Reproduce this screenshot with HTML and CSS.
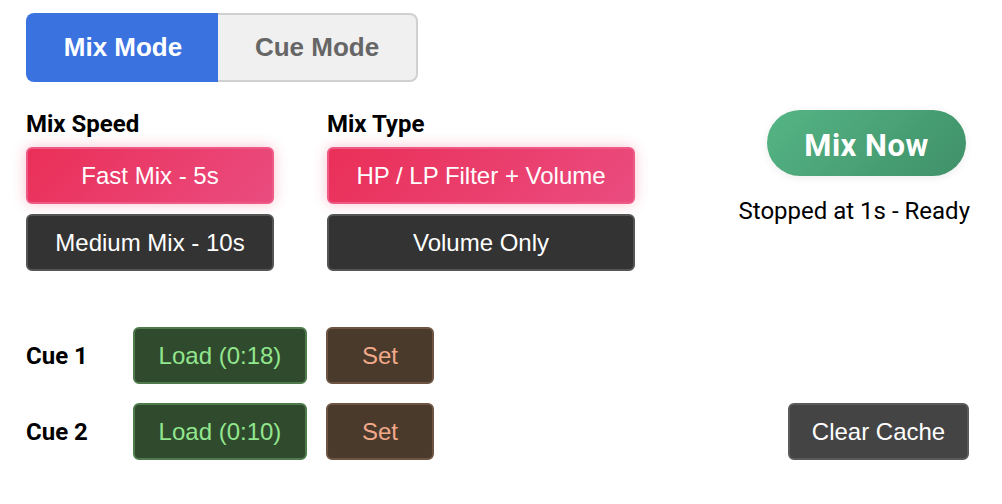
FILE: index.html
```html
<!DOCTYPE html>
<html lang="en">
<head>
    <meta charset="UTF-8">
    <meta name="viewport" content="width=device-width, initial-scale=1.0">
    <title>Mixer Controls</title>
    <link rel="stylesheet" href="styles.css">
</head>
<body>
    <div class="panel">
        <!-- Mode toggle -->
        <div class="mode-toggle">
            <button class="mode-btn active">Mix Mode</button>
            <button class="mode-btn">Cue Mode</button>
        </div>

        <!-- Mix options -->
        <div class="mix-row">
            <div class="option-group speed-group">
                <div class="group-label">Mix Speed</div>
                <button class="option-btn selected">Fast Mix - 5s</button>
                <button class="option-btn">Medium Mix - 10s</button>
            </div>
            <div class="option-group type-group">
                <div class="group-label">Mix Type</div>
                <button class="option-btn selected">HP / LP Filter + Volume</button>
                <button class="option-btn">Volume Only</button>
            </div>
            <div class="mix-action">
                <button class="mix-now">Mix Now</button>
                <div class="status">Stopped at 1s - Ready</div>
            </div>
        </div>

        <!-- Cue points -->
        <div class="cue-list">
            <div class="cue-row">
                <span class="cue-label">Cue 1</span>
                <button class="load-btn">Load (0:18)</button>
                <button class="set-btn">Set</button>
            </div>
            <div class="cue-row">
                <span class="cue-label">Cue 2</span>
                <button class="load-btn">Load (0:10)</button>
                <button class="set-btn">Set</button>
                <button class="clear-btn">Clear Cache</button>
            </div>
        </div>
    </div>
</body>
</html>
```

FILE: styles.css
```css
body {
    margin: 0;
    font-family: Roboto, "Liberation Sans", sans-serif;
    background: #fff;
    color: #000;
}
.panel {
    padding: 13px 32px 0 26px;
}
button {
    font-family: "Liberation Sans", Arial, sans-serif;
    cursor: pointer;
}
.mode-toggle {
    display: flex;
    width: 392px;
    height: 69px;
}
.mode-btn {
    flex: 1;
    font-size: 26px;
    font-weight: bold;
    border: 2px solid #d0d0d0;
    background: #f0f0f0;
    color: #666;
}
.mode-btn:first-child {
    border-radius: 8px 0 0 8px;
    border-right: none;
}
.mode-btn:last-child {
    border-radius: 0 8px 8px 0;
    border-left: none;
}
.mode-btn.active {
    background: #3a73e0;
    border-color: #3a73e0;
    color: #fff;
    flex: 0 0 192px;
}
.mix-row {
    display: flex;
    margin-top: 25px;
}
.option-group {
    display: flex;
    flex-direction: column;
    gap: 10px;
}
.speed-group {
    width: 248px;
    margin-right: 53px;
}
.type-group {
    width: 308px;
}
.group-label {
    font-size: 24px;
    font-weight: bold;
    line-height: 30px;
    padding-top: 2px;
    margin-bottom: -2px;
}
.option-btn {
    height: 57px;
    font-size: 24px;
    color: #fff;
    background: #333;
    border: 2px solid #555;
    border-radius: 6px;
}
.option-btn.selected {
    background: linear-gradient(135deg, #ea2f58, #ea4c80);
    border-color: #ee5a85;
    box-shadow: 0 0 14px rgba(234, 52, 96, 0.3);
}
.mix-action {
    margin-left: auto;
    margin-top: 3px;
    display: flex;
    flex-direction: column;
    align-items: flex-end;
}
.mix-now {
    width: 199px;
    height: 66px;
    padding-top: 5px;
    margin-right: 4px;
    border: none;
    border-radius: 33px;
    background: linear-gradient(135deg, #55b585, #3f9068);
    color: #fff;
    font-family: Roboto, "Liberation Sans", sans-serif;
    font-size: 31px;
    font-weight: bold;
    letter-spacing: 0.5px;
    box-shadow: 0 2px 8px rgba(0, 0, 0, 0.08);
}
.status {
    font-size: 24px;
    line-height: 28px;
    margin-top: 21px;
}
.cue-list {
    display: flex;
    flex-direction: column;
    gap: 19px;
    margin-top: 56px;
}
.cue-row {
    display: flex;
    align-items: center;
    gap: 19px;
    height: 57px;
}
.cue-label {
    width: 88px;
    font-size: 24px;
    font-weight: bold;
}
.load-btn,
.set-btn,
.clear-btn {
    height: 57px;
    font-size: 24px;
    border-radius: 6px;
}
.load-btn {
    width: 174px;
    background: #2f4a2d;
    border: 2px solid #4f7a4c;
    color: #92e68e;
}
.set-btn {
    width: 108px;
    background: #4a3a2c;
    border: 2px solid #6e5442;
    color: #f2a98a;
}
.clear-btn {
    margin-left: auto;
    width: 181px;
    margin-right: 1px;
    background: #444;
    border: 2px solid #5a5a5a;
    color: #fff;
}
```
